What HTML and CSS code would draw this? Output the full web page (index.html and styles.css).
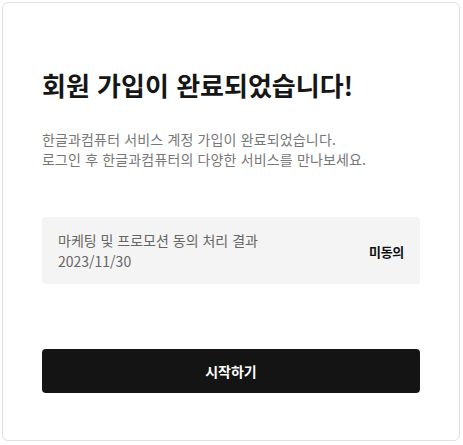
FILE: index.html
```html
<!DOCTYPE html>
<html lang="ko">
<head>
    <meta charset="UTF-8">
    <meta name="viewport" content="width=device-width, initial-scale=1.0">
    <title>회원 가입 완료</title>
    <link rel="stylesheet" href="styles.css">
</head>
<body>
    <main class="join-card">
        <h1 class="join-title">회원 가입이 완료되었습니다!</h1>
        <p class="join-desc">한글과컴퓨터 서비스 계정 가입이 완료되었습니다.<br>로그인 후 한글과컴퓨터의 다양한 서비스를 만나보세요.</p>
        <div class="consent-box">
            <div class="consent-info">
                <p>마케팅 및 프로모션 동의 처리 결과</p>
                <p>2023/11/30</p>
            </div>
            <span class="consent-state">미동의</span>
        </div>
        <button type="button" class="start-btn">시작하기</button>
    </main>
</body>
</html>
```
FILE: styles.css
```css
/* Global */
body {
    margin: 0;
    padding: 2px;
    background-color: #fff;
    font-family: "Noto Sans CJK KR", "Noto Sans", sans-serif;
    color: #111;
}

/* Card */
.join-card {
    box-sizing: border-box;
    width: 458px;
    height: 439px;
    padding: 0 39px;
    border: 1px solid #e1e1e1;
    border-radius: 6px;
}

.join-title {
    margin: 64px 0 0;
    font-size: 26px;
    font-weight: 700;
    line-height: 36px;
    color: #161616;
}

.join-desc {
    margin: 26px 0 0;
    font-size: 14px;
    line-height: 20px;
    letter-spacing: 0.15px;
    color: #777;
}

/* Consent result */
.consent-box {
    display: flex;
    align-items: center;
    justify-content: space-between;
    margin-top: 48px;
    padding: 13px 16px 12px;
    border-radius: 4px;
    background-color: #f4f4f4;
}

.consent-info p {
    margin: 0;
    font-size: 14px;
    line-height: 21px;
    color: #666;
}

.consent-state {
    font-size: 13px;
    font-weight: 700;
    letter-spacing: -0.3px;
    color: #111;
}

/* Button */
.start-btn {
    display: block;
    width: 100%;
    height: 44px;
    margin-top: 65px;
    border: none;
    border-radius: 4px;
    background-color: #141414;
    font-family: inherit;
    font-size: 14px;
    font-weight: 700;
    color: #fff;
}
```
